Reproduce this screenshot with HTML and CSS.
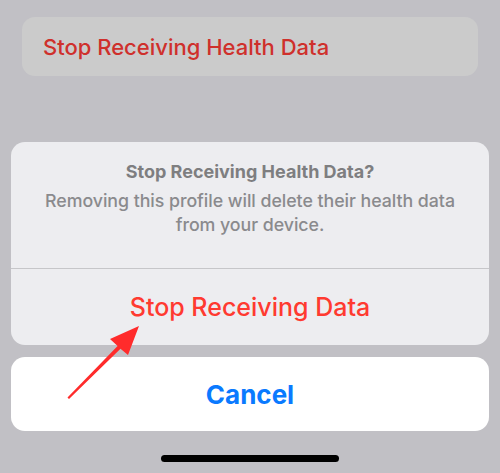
FILE: index.html
```html
<!DOCTYPE html>
<html lang="en">
<head>
    <meta charset="UTF-8">
    <meta name="viewport" content="width=device-width, initial-scale=1.0">
    <title>Stop Receiving Health Data</title>
    <link rel="stylesheet" href="styles.css">
</head>
<body>
    <!-- Riga della lista dietro il foglio -->
    <div class="row-card">
        <span class="row-label">Stop Receiving Health Data</span>
    </div>

    <!-- Action sheet -->
    <div class="sheet">
        <div class="sheet-group">
            <div class="sheet-header">
                <p class="sheet-title">Stop Receiving Health Data?</p>
                <p class="sheet-message">Removing this profile will delete their health data<br>from your device.</p>
            </div>
            <button class="sheet-action destructive">Stop Receiving Data</button>
        </div>
        <button class="sheet-cancel">Cancel</button>
    </div>

    <div class="home-indicator"></div>

    <!-- Freccia di annotazione -->
    <svg class="pointer-arrow" width="500" height="473" viewBox="0 0 500 473">
        <polygon points="139,326 128,355 120.5,348.8 69,399 67.5,397.5 117.6,346 110,339" fill="#ff2b2b"/>
    </svg>
</body>
</html>
```

FILE: styles.css
```css
body {
    font-family: 'Inter', 'Liberation Sans', sans-serif;
    margin: 0;
    padding: 0;
    background: #c1c0c5;
    width: 500px;
    height: 473px;
    overflow: hidden;
    display: flex;
    flex-direction: column;
    align-items: center;
}

.row-card {
    box-sizing: border-box;
    width: 456px;
    height: 59px;
    margin-top: 17px;
    padding-left: 21px;
    background: #cbcbcb;
    border-radius: 13px;
    display: flex;
    align-items: center;
}

.row-label {
    font-size: 22px;
    font-weight: 500;
    color: #cf302c;
}

.sheet {
    width: 478px;
    margin-top: 66px;
    display: flex;
    flex-direction: column;
    gap: 12px;
}

.sheet-group {
    background: #ededf0;
    border-radius: 14px;
    overflow: hidden;
}

.sheet-header {
    padding: 19px 10px 31px;
    text-align: center;
    border-bottom: 1px solid #c6c6c9;
}

.sheet-title {
    margin: 0;
    font-size: 18px;
    font-weight: 700;
    line-height: 22px;
    color: #7e7e80;
}

.sheet-message {
    margin: 6px 0 0;
    font-size: 17.8px;
    font-weight: 500;
    line-height: 24px;
    letter-spacing: -0.05px;
    color: #8a8a8d;
}

button {
    font-family: inherit;
    border: none;
    width: 100%;
    cursor: pointer;
}

.sheet-action {
    height: 76px;
    background: transparent;
    font-size: 25px;
    font-weight: 500;
}

.destructive {
    color: #ff3a30;
}

.sheet-cancel {
    height: 74px;
    background: #ffffff;
    border-radius: 14px;
    font-size: 26px;
    font-weight: 700;
    color: #0a7aff;
}

.home-indicator {
    width: 178px;
    height: 7px;
    margin-top: 24px;
    background: #000000;
    border-radius: 4px;
}

.pointer-arrow {
    position: absolute;
    top: 0;
    left: 0;
    pointer-events: none;
}
```
